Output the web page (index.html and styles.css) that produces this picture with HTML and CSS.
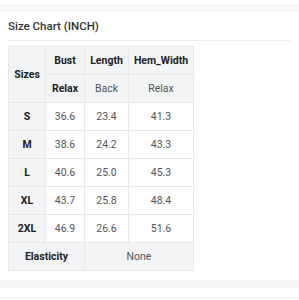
FILE: index.html
```html
<!DOCTYPE html>
<html>
<head>
<meta charset="utf-8">
<link rel="stylesheet" href="styles.css">
</head>
<body>
<div class="top-space"></div>
<div class="band"></div>
<section class="card">
  <h2 class="title">Size Chart (INCH)</h2>
  <div class="rule"></div>
  <table class="chart">
    <colgroup>
      <col class="c1"><col class="c2"><col class="c3"><col class="c4">
    </colgroup>
    <tr>
      <th rowspan="2" class="head">Sizes</th>
      <th class="head">Bust</th>
      <th class="head">Length</th>
      <th class="head">Hem_Width</th>
    </tr>
    <tr>
      <th class="head">Relax</th>
      <td class="sub">Back</td>
      <td class="sub">Relax</td>
    </tr>
    <tr><th class="head">S</th><td>36.6</td><td>23.4</td><td>41.3</td></tr>
    <tr><th class="head">M</th><td>38.6</td><td>24.2</td><td>43.3</td></tr>
    <tr><th class="head">L</th><td>40.6</td><td>25.0</td><td>45.3</td></tr>
    <tr><th class="head">XL</th><td>43.7</td><td>25.8</td><td>48.4</td></tr>
    <tr><th class="head">2XL</th><td>46.9</td><td>26.6</td><td>51.6</td></tr>
    <tr><th class="head" colspan="2">Elasticity</th><td class="sub" colspan="2">None</td></tr>
  </table>
</section>
<div class="band"></div>
<div class="next"></div>
</body>
</html>
```
FILE: styles.css
```css
html, body {
  margin: 0;
  padding: 0;
  background: #ffffff;
  font-family: Roboto, "Liberation Sans", Arial, sans-serif;
}
.top-space { height: 4px; }
.band { height: 8px; background: #f5f6f8; }
.card {
  padding: 0 8px 9px 8px;
}
.title {
  margin: 0;
  height: 28px;
  line-height: 28px;
  font-size: 11.5px;
  font-weight: 500;
  color: #333;
}
.rule {
  height: 1px;
  background: #eeeeee;
  margin-bottom: 5px;
}
.chart {
  border-collapse: collapse;
  font-size: 10.5px;
  color: #555;
}
.c1 { width: 37px; }
.c2 { width: 39px; }
.c3 { width: 44px; }
.c4 { width: 65px; }
.chart th, .chart td {
  border: 1px solid #e6e7ea;
  height: 27px;
  padding: 0;
  text-align: center;
}
.chart td { background: #fff; color: #555; font-weight: 400; }
.chart .head { background: #f3f4f6; color: #222; font-weight: 700; }
.chart .sub { background: #f3f4f6; color: #555; }
.next {
  height: 9px;
  border-bottom: 1px solid #f0f0f0;
}
```
